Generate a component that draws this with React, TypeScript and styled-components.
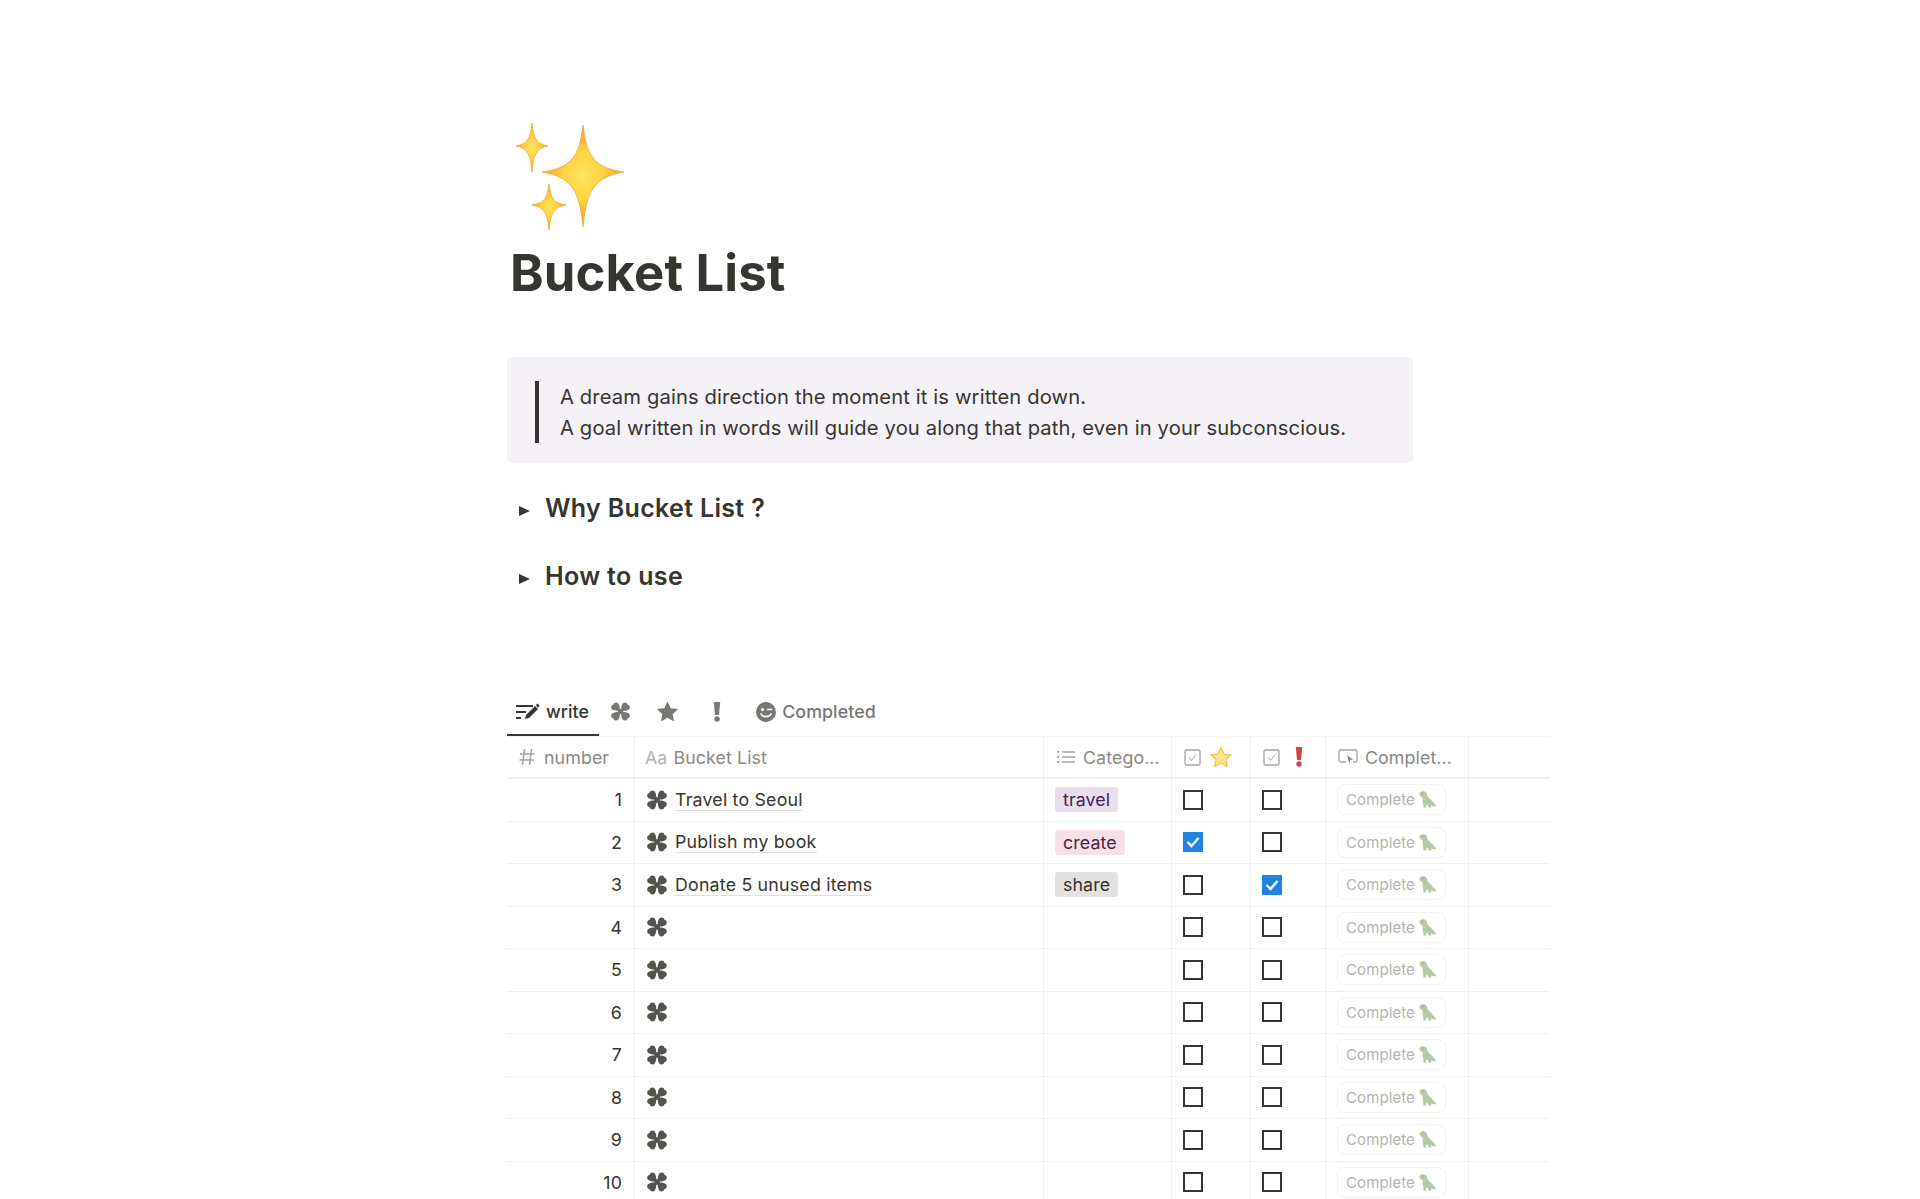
import React from 'react'
import styled, { createGlobalStyle } from 'styled-components'

const Global = createGlobalStyle`
  html, body {
    margin: 0;
    padding: 0;
    background: #fff;
    height: 1199px;
    overflow: hidden;
  }
  body {
    font-family: Inter, "Liberation Sans", sans-serif;
    color: #37352f;
  }
`

const Page = styled.div`
  width: 1043px;
  margin-left: 507px;
  padding-top: 118px;
`

const Hero = styled.svg`
  display: block;
  width: 120px;
  height: 120px;
  margin-left: 4px;
`

const Title = styled.h1`
  margin: 6px 0 0 3px;
  font-size: 50.8px;
  letter-spacing: 0.15px;
  line-height: 58px;
  font-weight: 700;
  color: #37352f;
`

const Quote = styled.div`
  width: 906px;
  box-sizing: border-box;
  margin-top: 55px;
  padding: 24px 28px 20px;
  background: #f4f2f7;
  border-radius: 5px;
`

const QuoteText = styled.p`
  margin: 0;
  padding: 1px 0 0 21px;
  border-left: 4px solid #37352f;
  font-size: 20.2px;
  letter-spacing: 0.13px;
  line-height: 30.5px;
  color: #37352f;
`

const Toggles = styled.div`
  margin-top: 24px;
  display: flex;
  flex-direction: column;
  gap: 26px;
`

const Toggle = styled.div`
  display: flex;
  align-items: center;
  gap: 15px;
  padding-left: 12px;
  height: 42px;
  font-size: 25px;
  letter-spacing: 0.33px;
  font-weight: 600;
`

const Arrow = styled.span`
  width: 0;
  height: 0;
  margin-top: 5px;
  border-left: 11px solid #37352f;
  border-top: 5.5px solid transparent;
  border-bottom: 5.5px solid transparent;
`

const Tabs = styled.div`
  display: flex;
  margin-top: 94px;
  height: 45px;
`

const Tab = styled.div<{ $active?: boolean; $w?: number }>`
  display: flex;
  align-items: center;
  justify-content: center;
  gap: 6px;
  box-sizing: border-box;
  width: ${p => (p.$w ? `${p.$w}px` : 'auto')};
  padding: 0 ${p => (p.$w ? '0' : p.$active ? '10px' : '9px')} 2px ${p => (p.$w ? '0' : '9px')};
  font-size: 17.8px;
  letter-spacing: 0.1px;
  font-weight: 500;
  color: ${p => (p.$active ? '#37352f' : '#787774')};
  border-bottom: 2px solid ${p => (p.$active ? '#37352f' : 'transparent')};
`

const CompletedTab = styled(Tab)`
  margin-left: 7px;
`

const Table = styled.div`
  display: grid;
  grid-template-columns: 128px 409px 128px 79px 75px 143px 81px;
  border-top: 1px solid #f5f5f4;
`

const Head = styled.div<{ $last?: boolean; $gap?: number; $pad?: number }>`
  display: flex;
  align-items: center;
  gap: ${p => p.$gap ?? 7}px;
  height: 40px;
  padding-left: ${p => p.$pad ?? 12}px;
  font-size: 17.8px;
  letter-spacing: 0.1px;
  white-space: nowrap;
  color: #8a8985;
  border-bottom: 2px solid #efefee;
  border-right: ${p => (p.$last ? 'none' : '1px solid #efefee')};
`

const Cell = styled.div<{ $align?: string; $last?: boolean }>`
  display: flex;
  align-items: center;
  justify-content: ${p => p.$align || 'flex-start'};
  gap: 7px;
  box-sizing: border-box;
  height: 42.5px;
  padding: 0 ${p => (p.$align ? 12 : 0)}px 0 11px;
  font-size: 17.8px;
  letter-spacing: 0.1px;
  color: #37352f;
  border-bottom: 1px solid #efefee;
  border-right: ${p => (p.$last ? 'none' : '1px solid #efefee')};
`

const Name = styled.span`
  margin-top: 1px;
  border-bottom: 1px solid #dfdfdd;
  font-weight: 400;
  letter-spacing: 0.2px;
  line-height: 20px;
`

const Tag = styled.span<{ $bg: string; $fg: string }>`
  display: inline-flex;
  align-items: center;
  height: 25px;
  padding: 0 8px;
  border-radius: 3px;
  background: ${p => p.$bg};
  color: ${p => p.$fg};
`

const Check = styled.span<{ $on?: boolean }>`
  display: flex;
  align-items: center;
  justify-content: center;
  box-sizing: border-box;
  width: 20px;
  height: 20px;
  border: ${p => (p.$on ? 'none' : '2px solid #37352f')};
  background: ${p => (p.$on ? '#2383e2' : '#fff')};
`

const DoneButton = styled.div`
  display: flex;
  align-items: center;
  gap: 3px;
  height: 29px;
  padding: 0 8px;
  border: 1px solid #f0f0ef;
  border-radius: 8px;
  font-size: 15px;
  letter-spacing: 0.1px;
  color: #b4b3b0;
`

const AaMark = styled.span`
  color: #b3b2af;
`

const Clover = ({ size = 22, color = '#55534e' }: { size?: number; color?: string }) => (
  <svg width={size} height={size} viewBox="0 0 24 24" fill={color}>
    <path d="M11.200 11.200C8.500 11.600 5 11.200 3 10C.5 8.500.8 4.800 3.800 4.300C4.200 1.500 7.800.8 9.500 2.800C11 4.500 11.400 8 11.200 11.200Z" />
    <path d="M12.800 11.200C15.500 11.600 19 11.200 21 10C23.500 8.500 23.200 4.800 20.200 4.300C19.800 1.500 16.200.8 14.500 2.800C13 4.500 12.600 8 12.800 11.200Z" />
    <path d="M11.200 12.800C8.500 12.400 5 12.800 3 14C.5 15.500.8 19.200 3.800 19.700C4.200 22.500 7.800 23.200 9.500 21.200C11 19.500 11.400 16 11.200 12.800Z" />
    <path d="M12.800 12.800C15.500 12.400 19 12.800 21 14C23.500 15.500 23.200 19.200 20.200 19.700C19.800 22.500 16.200 23.200 14.500 21.200C13 19.500 12.600 16 12.800 12.800Z" />
    <rect x="9" y="9" width="6" height="6" />
  </svg>
)

const Sparkle = ({ cx, cy, rx, top, bot }: { cx: number; cy: number; rx: number; top: number; bot: number }) => {
  const a = 0.09
  const b = 0.3
  const d =
    `M${cx} ${cy - top}` +
    `C${cx + a * rx} ${cy - b * top} ${cx + b * rx} ${cy - a * top} ${cx + rx} ${cy}` +
    `C${cx + b * rx} ${cy + a * bot} ${cx + a * rx} ${cy + b * bot} ${cx} ${cy + bot}` +
    `C${cx - a * rx} ${cy + b * bot} ${cx - b * rx} ${cy + a * bot} ${cx - rx} ${cy}` +
    `C${cx - b * rx} ${cy - a * top} ${cx - a * rx} ${cy - b * top} ${cx} ${cy - top}Z`
  return <path d={d} fill="url(#spark)" stroke="#f2a53c" strokeWidth="0.8" strokeLinejoin="round" />
}

const Star = ({ size = 18, color = '#787774', edge }: { size?: number; color?: string; edge?: string }) => (
  <svg width={size} height={size} viewBox="0 0 24 24" fill={color} stroke={edge} strokeWidth={edge ? 1.2 : 0} strokeLinejoin="round">
    <path d="M12 1.500l3.300 7.200 7.800.8-5.800 5.300 1.600 7.700L12 18.600l-6.900 3.900 1.600-7.700L.9 9.500l7.800-.8z" />
  </svg>
)

const Bang = ({ color, w = 8, h = 20 }: { color: string; w?: number; h?: number }) => (
  <svg width={w} height={h} viewBox="0 0 8 20" fill={color}>
    <path d="M.8 0h6.400L6 13H2z" />
    <circle cx="4" cy="17" r="2.700" />
  </svg>
)

const WriteIcon = () => (
  <svg width="24" height="20" viewBox="0 0 24 20" fill="#37352f">
    <rect x="0" y="3" width="17" height="2" />
    <rect x="0" y="9" width="10" height="2" />
    <rect x="0" y="15" width="5" height="2" />
    <path d="M9 17l1-4L19 4l3 3-9 9zM20 3l1.500-1.500 2 2L22 6z" />
  </svg>
)

const WinkIcon = () => (
  <svg width="20" height="20" viewBox="0 0 20 20">
    <circle cx="10" cy="10" r="10" fill="#787774" />
    <circle cx="6.500" cy="7.500" r="1.600" fill="#fff" />
    <path d="M11.500 7.500h4" stroke="#fff" strokeWidth="1.500" strokeLinecap="round" />
    <path d="M5 12c1.500 3.500 8.500 3.500 10 0" stroke="#fff" strokeWidth="1.700" fill="none" strokeLinecap="round" />
  </svg>
)

const HashHead = () => (
  <svg width="16" height="18" viewBox="0 0 16 18" fill="none" stroke="#a5a4a1" strokeWidth="1.500">
    <path d="M5.500 1L3.500 17M12.500 1l-2 16M1 6h14.500M.5 12h14.500" />
  </svg>
)

const CheckboxHead = () => (
  <svg width="17" height="17" viewBox="0 0 17 17" fill="none" stroke="#a5a4a1" strokeWidth="1.300">
    <rect x="1" y="1" width="15" height="15" rx="1.500" />
    <path d="M5 8.500l2.500 3L12 5.500" strokeWidth="1" />
  </svg>
)

const ListHead = () => (
  <svg width="20" height="16" viewBox="0 0 20 16" fill="none" stroke="#a5a4a1" strokeWidth="1.300">
    <path d="M6 3h13M6 8h13M6 13h13" />
    <path d="M1 3h2M1 8h2M1 13h2" strokeWidth="2" />
  </svg>
)

const ButtonHead = () => (
  <svg width="20" height="17" viewBox="0 0 20 17" fill="none" stroke="#a5a4a1" strokeWidth="1.300">
    <path d="M8 13H3a2 2 0 0 1-2-2V3a2 2 0 0 1 2-2h14a2 2 0 0 1 2 2v8a2 2 0 0 1-2 2h-2" />
    <path d="M9 6l6 4.500-2.700.5-1 3.500z" fill="#8a8985" stroke="none" />
  </svg>
)

const Dino = () => (
  <svg width="19" height="19" viewBox="0 0 20 20">
    <path d="M1.500 4C1.500 2 4 .8 6.300 1.300c2.200.5 3.200 2.200 3.400 4 .1 1 .6 1.800 1.500 2.600l3 3c1.700 1.700 3.200 3.600 5.300 6.100-2.700.2-4.700-.3-6-1l.6 2.500H11l-1.200-3.200-1.500.6.500 2.600H5.800l-.5-4.800c-.6-1.800-.6-3.600-.2-5.200L3 6.500C2.200 6 1.500 5 1.500 4z" fill="#b5c9a4" />
    <circle cx="5" cy="3.200" r=".6" fill="#6d8a58" />
  </svg>
)

const rows: { name?: string; tag?: [string, string, string]; star?: boolean; bang?: boolean }[] = [
  { name: 'Travel to Seoul', tag: ['travel', '#e8deee', '#412454'] },
  { name: 'Publish my book', tag: ['create', '#f5e0e9', '#4c2337'], star: true },
  { name: 'Donate 5 unused items', tag: ['share', '#e3e2e0', '#32302c'], bang: true },
  {},
  {},
  {},
  {},
  {},
  {},
  {},
]

const Tick = () => (
  <svg width="14" height="12" viewBox="0 0 14 12" fill="none" stroke="#fff" strokeWidth="2.400">
    <path d="M1.500 6l4 4L12.500 2" />
  </svg>
)

export default function App() {
  return (
    <>
      <Global />
      <Page>
        <Hero viewBox="0 0 120 120">
          <defs>
            <radialGradient id="spark">
              <stop offset="0" stopColor="#ffe45c" />
              <stop offset="0.5" stopColor="#fdd23f" />
              <stop offset="1" stopColor="#f39c2a" />
            </radialGradient>
          </defs>
          <Sparkle cx={21} cy={28} rx={16} top={23} bot={26} />
          <Sparkle cx={72} cy={54} rx={41} top={47} bot={55} />
          <Sparkle cx={38} cy={87} rx={17} top={21} bot={25} />
        </Hero>
        <Title>Bucket List</Title>
        <Quote>
          <QuoteText>
            A dream gains direction the moment it is written down.
            <br />
            A goal written in words will guide you along that path, even in your subconscious.
          </QuoteText>
        </Quote>
        <Toggles>
          <Toggle>
            <Arrow />
            Why Bucket List ?
          </Toggle>
          <Toggle>
            <Arrow />
            How to use
          </Toggle>
        </Toggles>
        <Tabs>
          <Tab $active>
            <WriteIcon />
            write
          </Tab>
          <Tab $w={42}>
            <Clover size={21} color="#787774" />
          </Tab>
          <Tab $w={53}>
            <Star size={23} />
          </Tab>
          <Tab $w={46}>
            <Bang color="#787774" />
          </Tab>
          <CompletedTab>
            <WinkIcon />
            Completed
          </CompletedTab>
        </Tabs>
        <Table>
          <Head $gap={9}>
            <HashHead />
            <span>number</span>
          </Head>
          <Head $gap={6} $pad={10}>
            <AaMark>Aa</AaMark>
            <span>Bucket List</span>
          </Head>
          <Head>
            <ListHead />
            <span>Catego...</span>
          </Head>
          <Head $gap={9}>
            <CheckboxHead />
            <Star size={22} color="#ffe58a" edge="#f5b945" />
          </Head>
          <Head $gap={15}>
            <CheckboxHead />
            <Bang color="#d9423e" />
          </Head>
          <Head>
            <ButtonHead />
            <span>Complet...</span>
          </Head>
          <Head $last />
          {rows.map((row, i) => (
            <React.Fragment key={i}>
              <Cell $align="flex-end">{i + 1}</Cell>
              <Cell>
                <Clover />
                {row.name && <Name>{row.name}</Name>}
              </Cell>
              <Cell>{row.tag && <Tag $bg={row.tag[1]} $fg={row.tag[2]}>{row.tag[0]}</Tag>}</Cell>
              <Cell>
                <Check $on={row.star}>{row.star && <Tick />}</Check>
              </Cell>
              <Cell>
                <Check $on={row.bang}>{row.bang && <Tick />}</Check>
              </Cell>
              <Cell>
                <DoneButton>
                  Complete
                  <Dino />
                </DoneButton>
              </Cell>
              <Cell $last />
            </React.Fragment>
          ))}
        </Table>
      </Page>
    </>
  )
}
